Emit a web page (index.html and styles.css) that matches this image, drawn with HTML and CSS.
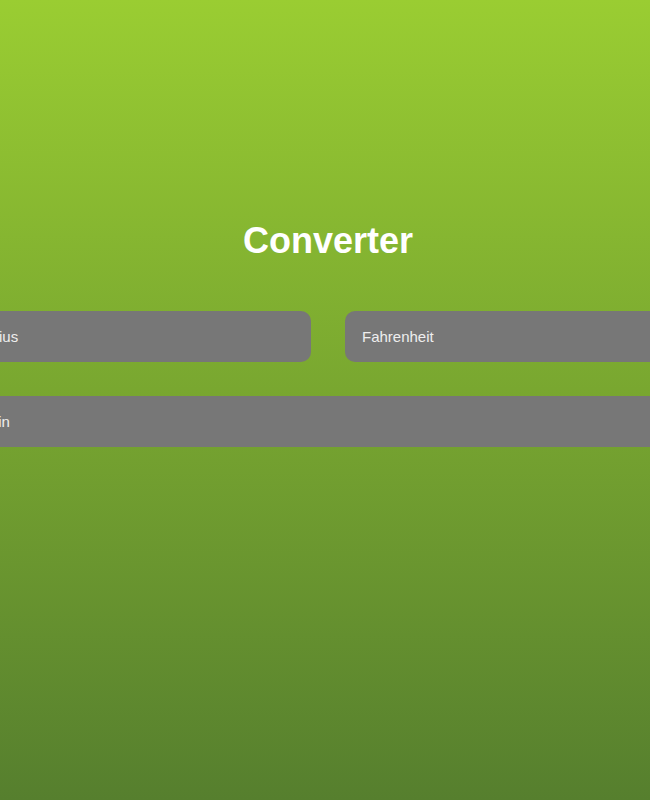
FILE: index.html
```html
<!DOCTYPE html>
<html>
<head>
<meta charset="utf-8">
<link rel="stylesheet" href="styles.css">
</head>
<body>
<main class="page">
  <h1 class="title">Converter</h1>
  <div class="fields">
    <input class="field" type="text" placeholder="Celsius">
    <input class="field" type="text" placeholder="Fahrenheit">
    <input class="field field-wide" type="text" placeholder="Kelvin">
  </div>
</main>
</body>
</html>
```
FILE: styles.css
```css
html, body {
  margin: 0;
  padding: 0;
  height: 100%;
  overflow: hidden;
}
body {
  background: linear-gradient(to bottom, #9acd32 0%, #567f2e 100%);
  font-family: "Liberation Sans", Arial, sans-serif;
}
.page {
  display: flex;
  flex-direction: column;
  align-items: center;
  padding-top: 220px;
}
.title {
  margin: 0 0 50px 6px;
  font-size: 36px;
  line-height: 41px;
  font-weight: bold;
  color: #ffffff;
}
.fields {
  flex: none;
  width: 752px;
  margin-left: 6px;
  display: grid;
  grid-template-columns: 1fr 1fr;
  column-gap: 34px;
  row-gap: 34px;
}
.field {
  box-sizing: border-box;
  height: 51px;
  width: 100%;
  border: none;
  outline: none;
  border-radius: 10px;
  background: #777777;
  padding: 0 17px;
  font-family: "Liberation Sans", Arial, sans-serif;
  font-size: 15px;
  color: #eeeeee;
}
.field::placeholder {
  color: #eeeeee;
  opacity: 1;
}
.field-wide {
  grid-column: 1 / 3;
  border-radius: 0;
}
```
